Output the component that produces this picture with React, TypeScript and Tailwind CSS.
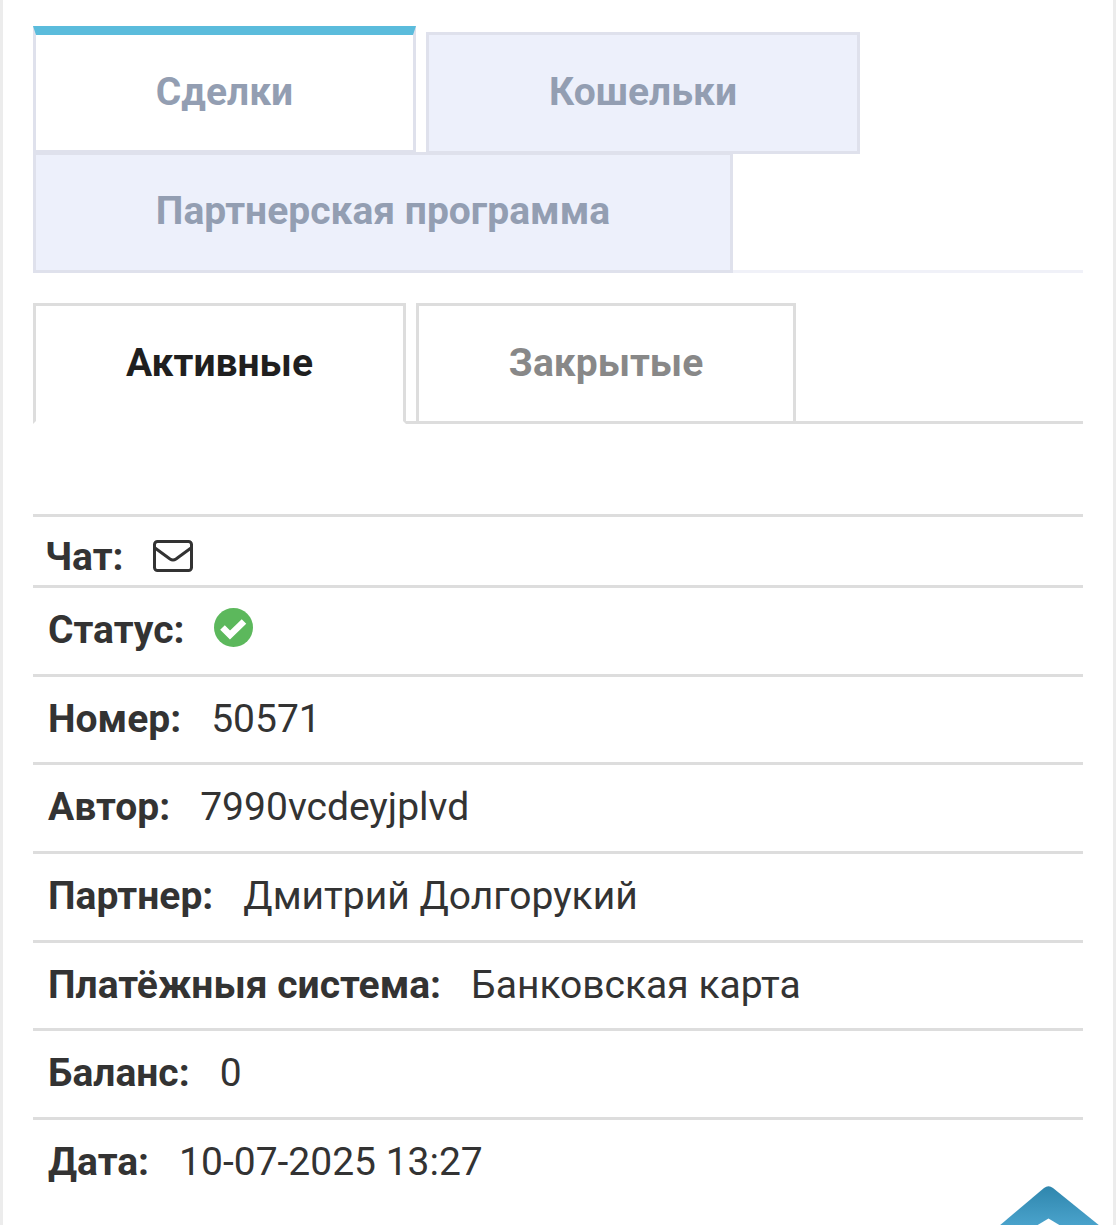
const rows = [
  { label: 'Номер:', value: '50571', box: 'h-[88px]' },
  { label: 'Автор:', value: '7990vcdeyjplvd', box: 'h-[89px] pb-[2px]' },
  { label: 'Партнер:', value: 'Дмитрий Долгорукий', box: 'h-[89px] pb-[2px]' },
  { label: 'Платёжныя система:', value: 'Банковская карта', box: 'h-[88px]' },
  { label: 'Баланс:', value: '0', box: 'h-[89px] pb-[2px]' },
];

const ScrollTop = () => (
  <div className="fixed left-[990px] top-[1180px]">
    <svg width="120" height="45" viewBox="0 0 120 45" aria-hidden="true">
      <defs>
        <linearGradient id="scrollTopFill" x1="0" y1="0" x2="0" y2="1">
          <stop offset="0" stopColor="#2f86ad" />
          <stop offset="1" stopColor="#4aa3cc" />
        </linearGradient>
      </defs>
      <path
        d="M54 8 Q58.500 4.500 63 8 L110 46 L9 46 Z"
        fill="url(#scrollTopFill)"
      />
      <path d="M46 46 L58.500 38.500 L71 46 Z" fill="#ffffff" />
    </svg>
  </div>
);

export default function App() {
  return (
    <div className="h-[1225px] overflow-hidden bg-white border-x-[3px] border-[#ececec] px-[30px] font-['Roboto',sans-serif] text-[39px] text-[#333333]">
      {/* Main tabs */}
      <div className="pt-[26px] flex flex-wrap border-b-[3px] border-[#f0f1f8] h-[273px] content-start">
        <div className="relative z-10 w-[383px] h-[127px] flex items-center justify-center bg-white border-x-[3px] border-t-[9px] border-b-[3px] border-x-[#dfe1ec] border-t-[#5bbcdc] border-b-[#dfe1ec] font-bold text-[#939eb2]">
          Сделки
        </div>
        <div className="ml-[10px] mt-[6px] w-[434px] h-[122px] pb-[2px] flex items-center justify-center bg-[#edf0fb] border-[3px] border-[#dfe1ec] font-bold text-[#939eb2]">
          Кошельки
        </div>
        <div className="-mt-[2px] w-[700px] h-[121px] pb-[2px] flex items-center justify-center bg-[#edf0fb] border-[3px] border-[#dfe1ec] font-bold text-[#939eb2]">
          Партнерская программа
        </div>
      </div>

      {/* Sub tabs */}
      <div className="mt-[30px] flex border-b-[3px] border-[#dddddd] h-[121px]">
        <div className="w-[373px] h-[121px] flex items-center justify-center bg-white border-x-[3px] border-t-[3px] border-b-[3px] border-x-[#dddddd] border-t-[#dddddd] border-b-white font-bold text-[#1f1f1f]">
          Активные
        </div>
        <div className="ml-[10px] w-[380px] h-[121px] pb-[4px] flex items-center justify-center border-x-[3px] border-t-[3px] border-[#dddddd] font-bold text-[#888888]">
          Закрытые
        </div>
      </div>

      {/* Deal info */}
      <div className="mt-[90px] border-t-[3px] border-[#dddddd]">
        <div className="h-[71px] pl-[12px] pt-[12px] flex items-center border-b-[3px] border-[#dddddd]">
          <b>Чат:</b>
          <svg className="ml-[29px] mb-[2px]" width="40" height="32" viewBox="0 0 40 32" fill="none" stroke="#333333" strokeWidth="3" aria-hidden="true">
            <rect x="1.500" y="1.500" width="37" height="29" rx="3" />
            <path d="M2 8 L17 19 Q20 21 23 19 L38 8" />
          </svg>
        </div>
        <div className="h-[89px] pl-[15px] pb-[2px] flex items-center border-b-[3px] border-[#dddddd]">
          <b>Статус:</b>
          <svg className="ml-[30px] mb-[6px]" width="39" height="39" viewBox="0 0 39 39" aria-hidden="true">
            <circle cx="19.500" cy="19.500" r="19.500" fill="#5cb85c" />
            <path d="M8.500 19.500 L16 27 L30 13.500" fill="none" stroke="#ffffff" strokeWidth="6.500" />
          </svg>
        </div>
        {rows.map((row) => (
          <div
            key={row.label}
            className={`${row.box} pl-[15px] flex items-center border-b-[3px] border-[#dddddd]`}
          >
            <b>{row.label}</b>
            <span className="ml-[30px]">{row.value}</span>
          </div>
        ))}
        <div className="h-[89px] pl-[15px] pb-[4px] flex items-center">
          <b>Дата:</b>
          <span className="ml-[30px]">10-07-2025 13:27</span>
        </div>
      </div>

      <ScrollTop />
    </div>
  );
}
